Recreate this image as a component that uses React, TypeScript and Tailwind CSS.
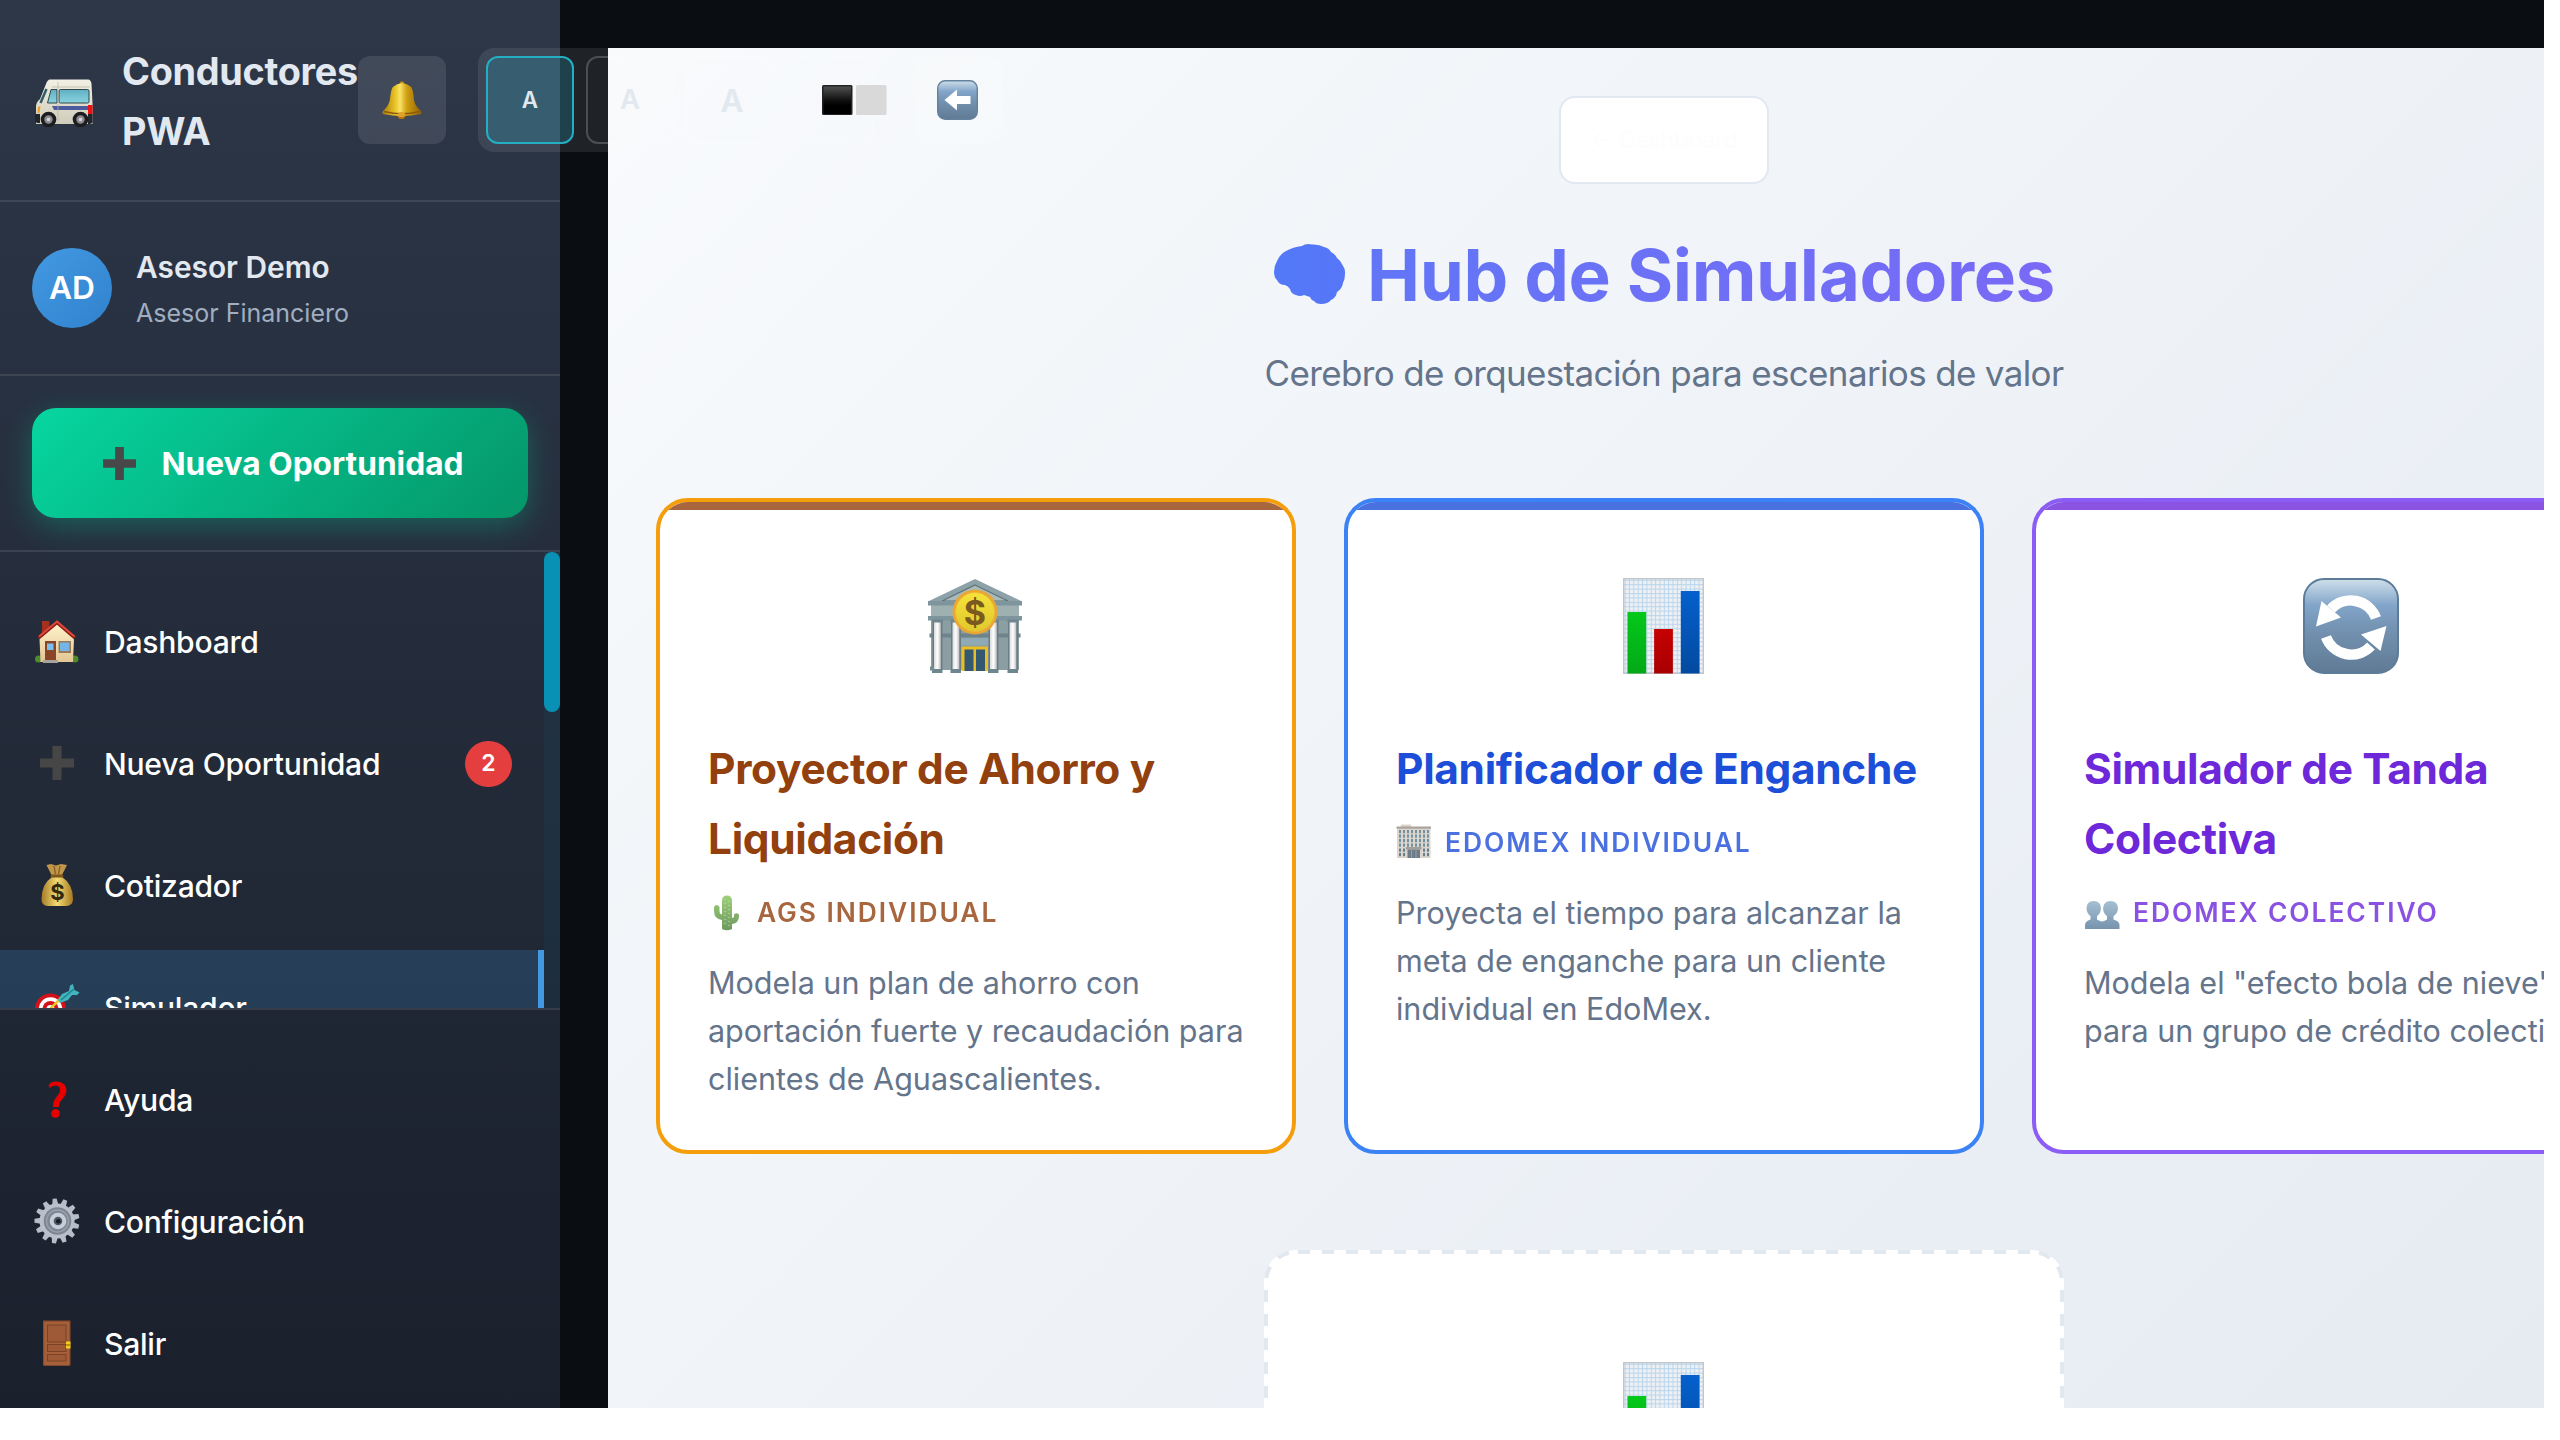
import React from "react";

function VanIcon() {
  return (
    <svg width="58" height="48" viewBox="0 0 58 48">
      <defs>
        <linearGradient id="vanBody" x1="0" y1="0" x2="0" y2="1">
          <stop offset="0" stopColor="#f2f0e4" />
          <stop offset="1" stopColor="#cfccba" />
        </linearGradient>
        <linearGradient id="vanGlass" x1="0" y1="0" x2="0" y2="1">
          <stop offset="0" stopColor="#5fb0c2" />
          <stop offset="1" stopColor="#8ad3df" />
        </linearGradient>
      </defs>
      <path d="M15 .5H53Q56 .5 56.500 5L57.500 24V45H1V28Q1 23 5 20L11 5Q12.500 .5 15 .5Z" fill="url(#vanBody)" />
      <path d="M11.500 10L5.500 24" stroke="#2f5f6c" strokeWidth="2.500" />
      <path d="M16 10.500H22V24H12.500Z" fill="url(#vanGlass)" stroke="#31474d" strokeWidth="1" />
      <rect x="24" y="10.500" width="30" height="13.500" rx="1.500" fill="url(#vanGlass)" stroke="#31474d" strokeWidth="1" />
      <path d="M17 27H53V31H19Z" fill="#4c5b9e" />
      <path d="M23 3V42M17 8H55" stroke="#b9b6a4" strokeWidth=".7" />
      <path d="M53 26H57.500V35H53Z" fill="#f01010" />
      <path d="M3 28L5.500 27L4.500 34H2.500Z" fill="#f0a020" />
      <path d="M0 35H5V44Q0 44 0 42ZM53 35H57.500V43Q57 45 53 45Z" fill="#23262c" />
      <circle cx="13.500" cy="40.500" r="7.800" fill="#1d1d20" />
      <circle cx="45.500" cy="40.500" r="7.800" fill="#1d1d20" />
      <circle cx="13.500" cy="40.500" r="4.200" fill="#8b8b90" />
      <circle cx="45.500" cy="40.500" r="4.200" fill="#8b8b90" />
      <circle cx="13.500" cy="40.500" r="1.800" fill="#d8d8dc" />
      <circle cx="45.500" cy="40.500" r="1.800" fill="#d8d8dc" />
    </svg>
  );
}

function BellIcon() {
  return (
    <svg width="40" height="38" viewBox="0 0 40 38">
      <defs>
        <linearGradient id="bell" x1="0" y1="0" x2="1" y2="0">
          <stop offset="0" stopColor="#a87a0c" />
          <stop offset=".32" stopColor="#e9c224" />
          <stop offset=".45" stopColor="#f8e266" />
          <stop offset=".62" stopColor="#d0a012" />
          <stop offset="1" stopColor="#8d5f08" />
        </linearGradient>
      </defs>
      <circle cx="20" cy="2.500" r="2.300" fill="#b8890f" />
      <circle cx="19.500" cy="34" r="4.200" fill="#b9720e" />
      <path d="M20 2Q31 3 31.500 14Q31.500 24 38 29Q40.500 31 39 33Q20 37 1 33Q-.5 31 2 29Q8 24 8.500 14Q9 3 20 2Z" fill="url(#bell)" />
      <path d="M2 30.500Q20 35 38 30.500" stroke="#8a5c0a" strokeWidth="1.500" fill="none" />
      <ellipse cx="19.500" cy="33.500" rx="3.500" ry="2.600" fill="#e0a22a" />
    </svg>
  );
}

function SquaresIcon() {
  return (
    <svg className="shrink-0" width="65" height="30" viewBox="0 0 65 30">
      <defs>
        <linearGradient id="sq" x1="0" y1="0" x2="0" y2="1">
          <stop offset="0" stopColor="#505050" />
          <stop offset=".5" stopColor="#101010" />
          <stop offset=".7" stopColor="#000" />
        </linearGradient>
      </defs>
      <rect width="30.500" height="30" rx="1.500" fill="#222" />
      <rect x="1.500" y="1.500" width="27.500" height="27.500" fill="url(#sq)" />
      <rect x="34" width="30.500" height="30" rx="1.500" fill="#d9d9d9" />
    </svg>
  );
}

function KeycapFill({ id }: { id: string }) {
  return (
    <linearGradient id={id} x1="0" y1="0" x2="0" y2="1">
      <stop offset="0" stopColor="#cfdfea" />
      <stop offset=".28" stopColor="#82a5c9" />
      <stop offset=".55" stopColor="#7391b0" />
      <stop offset="1" stopColor="#5f7a94" />
    </linearGradient>
  );
}

function BackIcon() {
  return (
    <svg width="41" height="40" viewBox="0 0 41 40">
      <defs><KeycapFill id="keyBack" /></defs>
      <rect x=".7" y=".7" width="39.600" height="38.600" rx="7.500" fill="url(#keyBack)" stroke="#64819d" strokeWidth="1.400" />
      <path d="M7.500 20L20 9.500V16H33.500V24H20V30.500Z" fill="#fff" />
    </svg>
  );
}

function RefreshIcon() {
  return (
    <svg width="96" height="96" viewBox="0 0 96 96">
      <defs><KeycapFill id="keyRefresh" /></defs>
      <rect x="1" y="1" width="94" height="94" rx="20" fill="url(#keyRefresh)" stroke="#5c7c99" strokeWidth="2" />
      <path d="M73 40A27 27 0 0 0 28 31M23 59A27 27 0 0 0 68 68" stroke="#fff" strokeWidth="10.500" fill="none" />
      <path d="M13 48.500L18.500 23L38 39.500ZM83.500 48L77.500 73L58 56.500Z" fill="#fff" />
    </svg>
  );
}

function PlusIcon({ size, color }: { size: number; color: string }) {
  return (
    <svg width={size} height={size} viewBox="0 0 34 34">
      <path d="M12.500 0H21.500V12.500H34V21.500H21.500V34H12.500V21.500H0V12.500H12.500Z" fill={color} />
    </svg>
  );
}

function HouseIcon() {
  return (
    <svg width="48" height="48" viewBox="0 0 48 48">
      <defs>
        <linearGradient id="wall" x1="0" y1="0" x2="0" y2="1">
          <stop offset="0" stopColor="#fff3cc" />
          <stop offset="1" stopColor="#e3c795" />
        </linearGradient>
      </defs>
      <path d="M9 4H16.500V10L9 17Z" fill="#a5301f" />
      <circle cx="5.500" cy="42" r="3.500" fill="#4f8a2c" />
      <circle cx="42" cy="42" r="3.500" fill="#4f8a2c" />
      <path d="M6.500 21L24 6L41 21L40 45H7.500Z" fill="url(#wall)" />
      <path d="M5.500 21L24 5.500L42 21" fill="none" stroke="#8e1d18" strokeWidth="3.400" />
      <path d="M6 19.500L24 4.500L41.500 19.500" fill="none" stroke="#e04a3a" strokeWidth="1.800" />
      <rect x="12" y="24" width="11" height="20" fill="#8a4529" />
      <rect x="14" y="26.500" width="6.500" height="6.500" fill="#7cc0f0" />
      <rect x="25.500" y="24" width="12.500" height="12" fill="#9c7a55" />
      <rect x="27" y="25.500" width="9.500" height="8.500" fill="#74b4e6" />
      <path d="M10 43H25V46H10Z" fill="#a7a29a" />
    </svg>
  );
}

function MoneyIcon() {
  return (
    <svg width="48" height="48" viewBox="0 0 48 48">
      <defs>
        <linearGradient id="bag" x1="0" y1="0" x2="1" y2="0">
          <stop offset="0" stopColor="#a67c28" />
          <stop offset=".5" stopColor="#f5db74" />
          <stop offset="1" stopColor="#a67820" />
        </linearGradient>
      </defs>
      <path d="M13.500 4L18 3L23 4.500L28 3L34 4L28.500 15H19Z" fill="#c29648" />
      <path d="M21 5L22.500 13M27 5L25.500 13" stroke="#86601f" strokeWidth="1.300" />
      <path d="M19 16H29Q40 23 40 38Q40 45 33 45H15Q8.500 45 8.500 38Q8.500 23 19 16Z" fill="url(#bag)" />
      <rect x="17.500" y="13.500" width="13" height="3" rx="1.500" fill="#7d5518" />
      <text x="24.500" y="38.500" textAnchor="middle" fontSize="22" fontWeight="700" fontFamily="Inter, sans-serif" fill="#33290f">$</text>
    </svg>
  );
}

function TargetIcon() {
  return (
    <svg width="48" height="48" viewBox="0 0 48 48">
      <circle cx="17.500" cy="26" r="15.500" fill="#d4111b" />
      <circle cx="17.500" cy="26" r="11.800" fill="#fff" />
      <circle cx="17.500" cy="26" r="8" fill="#d4111b" />
      <circle cx="17.500" cy="26" r="4" fill="#fff" />
      <path d="M17 26L29 14" stroke="#e8c928" strokeWidth="2.500" />
      <path d="M25 17L29 11L36 8L37 2.500L40 1L41.500 7L46.500 9.500L44 12H39L35 17L27 20Z" fill="#42b4bd" />
      <path d="M28 17L41 6" stroke="#1f828c" strokeWidth="1.400" />
    </svg>
  );
}

function QuestionIcon() {
  return (
    <svg width="48" height="48" viewBox="0 0 48 48">
      <path d="M15.500 10.500Q17.500 6.500 23 6.500Q33.500 7 33.500 15Q33.500 20 29 24.500Q25.500 28 26 32H20Q19.500 26.500 23.500 22Q27 18 27 15Q27 10.500 22.500 10.500Q19 10.500 17 13Z" fill="#e60000" />
      <ellipse cx="22.500" cy="38.500" rx="4.400" ry="4.400" fill="#e60000" />
    </svg>
  );
}

function GearIcon() {
  return (
    <svg width="48" height="48" viewBox="0 0 48 48">
      {Array.from({ length: 13 }, (_, i) => (
        <path key={i} d="M20.900 8L22 1.500H26L27.100 8Z" fill="#b5bdc9" transform={`rotate(${i * 27.69 - 6} 24 24)`} />
      ))}
      <circle cx="24" cy="24" r="17.500" fill="#b9c0cb" />
      <circle cx="24.500" cy="24" r="13.800" fill="#7d8793" />
      <circle cx="24.500" cy="24" r="11" fill="none" stroke="#98a1ac" strokeWidth="1.400" />
      <circle cx="25" cy="24" r="8.300" fill="#c6ced9" />
      <circle cx="25" cy="24" r="4.300" fill="#4d5865" />
      <circle cx="25.300" cy="24.300" r="2.300" fill="#171c26" />
    </svg>
  );
}

function DoorIcon() {
  return (
    <svg width="48" height="48" viewBox="0 0 48 48">
      <rect x="10" y="1.500" width="27.500" height="45" fill="#8a4a2c" />
      <rect x="11.200" y="2.700" width="25.200" height="43.800" fill="#a5603a" />
      <rect x="14.500" y="6" width="18.500" height="17" fill="#9e5a36" stroke="#7c4226" strokeWidth="1" />
      <rect x="14.500" y="25.500" width="18.500" height="7" fill="#9e5a36" stroke="#7c4226" strokeWidth="1" />
      <rect x="14.500" y="35.500" width="18.500" height="6.500" fill="#9e5a36" stroke="#7c4226" strokeWidth="1" />
      <rect x="33" y="22.500" width="4.500" height="7" fill="#f1cf1f" />
      <path d="M33 26H37.500" stroke="#7c5a10" strokeWidth="1" />
    </svg>
  );
}

function BankIcon() {
  return (
    <svg width="94" height="96" viewBox="0 0 94 96">
      <defs>
        <linearGradient id="coin" x1="0" y1="0" x2="0" y2="1">
          <stop offset="0" stopColor="#f7e23a" />
          <stop offset="1" stopColor="#e0c92c" />
        </linearGradient>
        <linearGradient id="pillar" x1="0" y1="0" x2="1" y2="0">
          <stop offset="0" stopColor="#d9d9dc" />
          <stop offset=".5" stopColor="#fff" />
          <stop offset="1" stopColor="#c0bfc4" />
        </linearGradient>
      </defs>
      <path d="M47 1L93 23H1Z" fill="#8da2a8" />
      <path d="M47 7L80 23H14Z" fill="#a9babb" stroke="#5f7277" strokeWidth="1.200" />
      <rect x="3" y="26" width="88" height="66" fill="#8b9fa3" />
      <rect x="3" y="27" width="88" height="11" fill="#9eb0b0" />
      <rect x="0" y="23" width="94" height="4.500" fill="#7f959d" />
      <rect x="0" y="38" width="94" height="4.500" fill="#7f959d" />
      <rect x="1.500" y="55.500" width="91" height="4" fill="#6e848c" />
      <rect x="31" y="60" width="31" height="7" fill="#8fa9b5" />
      {[6, 24.500, 62, 81.500].map((x) => (
        <g key={x}>
          <rect x={x - 1.500} y="44" width="10" height="48" fill="#687c82" />
          <rect x={x} y="44" width="6.800" height="48" fill="url(#pillar)" />
          <rect x={x - 2} y="41.500" width="11" height="3" fill="#6e868e" />
          <rect x={x - 2} y="91" width="10.500" height="4" fill="#6e868e" />
        </g>
      ))}
      <rect x="2" y="88.500" width="4" height="4" fill="#768b92" />
      <rect x="33.500" y="68.500" width="26.500" height="24.500" fill="#e8bd25" />
      <rect x="36.500" y="71.500" width="9" height="21.500" fill="#355871" />
      <rect x="48" y="71.500" width="9" height="21.500" fill="#355871" />
      <circle cx="47" cy="34" r="22.500" fill="#e8a733" />
      <circle cx="47" cy="34" r="19.500" fill="url(#coin)" stroke="#f0b83a" strokeWidth="1" />
      <text x="47" y="46.500" textAnchor="middle" fontSize="34" fontWeight="700" fontFamily="Inter, sans-serif" fill="#7a5a1e">$</text>
    </svg>
  );
}

function ChartIcon() {
  return (
    <svg width="81" height="96" viewBox="0 0 82 96" preserveAspectRatio="none">
      <defs>
        <pattern id="grid" width="4.400" height="4.400" patternUnits="userSpaceOnUse">
          <path d="M0 2.200H4.400M2.200 0V4.400" stroke="#b9d6ee" strokeWidth="1.100" />
        </pattern>
        <linearGradient id="gBar" x1="0" y1="0" x2="0" y2="1"><stop offset="0" stopColor="#04c81b" /><stop offset="1" stopColor="#03a916" /></linearGradient>
        <linearGradient id="rBar" x1="0" y1="0" x2="0" y2="1"><stop offset="0" stopColor="#c60000" /><stop offset="1" stopColor="#a80000" /></linearGradient>
        <linearGradient id="bBar" x1="0" y1="0" x2="0" y2="1"><stop offset="0" stopColor="#0560cd" /><stop offset="1" stopColor="#024a9f" /></linearGradient>
      </defs>
      <rect width="82" height="96" fill="#f0f1f2" />
      <rect width="82" height="96" fill="url(#grid)" />
      <rect x=".7" y=".7" width="80.600" height="94.600" fill="none" stroke="#c3c6c9" strokeWidth="1.400" />
      <rect x="4.500" y="34" width="19" height="61.500" fill="url(#gBar)" />
      <rect x="31.500" y="51" width="19" height="44.500" fill="url(#rBar)" />
      <rect x="58.500" y="13" width="19" height="82.500" fill="url(#bBar)" />
    </svg>
  );
}

function CactusIcon() {
  return (
    <svg width="36" height="36" viewBox="0 0 36 36">
      <defs>
        <linearGradient id="cactus" x1="0" y1="0" x2="0" y2="1">
          <stop offset="0" stopColor="#86c65a" />
          <stop offset="1" stopColor="#4a7f38" />
        </linearGradient>
      </defs>
      <path d="M14 6Q14 .5 19 .5Q24 .5 24 6V23Q26 23 26 21V19.500Q28.500 17 31 19.500V21Q31 28 24 29V34Q19 36.500 14 34V25Q6 24 6 16V12Q8.500 8 11.500 12V16Q11.500 19 14 19.500Z" fill="url(#cactus)" />
      <path d="M17 4V32M21 6V32" stroke="#c9e8a8" strokeWidth=".9" strokeDasharray="1 3" />
    </svg>
  );
}

function BuildingIcon() {
  return (
    <svg width="36" height="36" viewBox="0 0 36 36">
      <rect x="5" y=".5" width="10" height="3" fill="#d3c9bc" />
      <rect x="1" y="4" width="33.500" height="30" fill="#d3cbc2" />
      <rect x=".5" y="2.500" width="34.500" height="2.200" fill="#958c85" />
      {[6, 10.500, 15, 19.500].flatMap((y) => [3, 7, 11, 15, 19, 23, 27, 31].map((x) => <rect key={`${x}-${y}`} x={x} y={y} width="2" height="3.200" fill="#4f7689" />))}
      {[24.500, 29].flatMap((y) => [3, 7, 27, 31].map((x) => <rect key={`${x}-${y}`} x={x} y={y} width="2" height="3.200" fill="#41606f" />))}
      <rect x="10" y="23" width="15.500" height="2.500" fill="#8d857e" />
      <rect x="11.500" y="25.500" width="12.500" height="8.500" fill="#4a5d6b" />
      <path d="M15.500 26V34M20 26V34" stroke="#8798a3" strokeWidth=".8" />
    </svg>
  );
}

function PeopleIcon() {
  return (
    <svg width="36" height="36" viewBox="0 0 36 36">
      <defs>
        <linearGradient id="people" x1="0" y1="0" x2="0" y2="1">
          <stop offset="0" stopColor="#8fb0c8" />
          <stop offset="1" stopColor="#55799a" />
        </linearGradient>
      </defs>
      <path d="M9.500 6Q17 6 17 13.500Q16.500 19 13 21V24.500Q15.500 26 18 26.500Q21 26 23 24.500V21Q19.500 19 19 13.500Q19.500 6 26.500 6Q34 6 34 13.500Q33.500 19 29.500 21V24.500Q35.500 26 35.500 30V34H1V30Q1 26 6.500 24.500V21Q3 19 2.500 13.500Q2.500 6 9.500 6Z" fill="url(#people)" />
    </svg>
  );
}

function BrainIcon() {
  return (
    <svg width="72" height="60" viewBox="0 0 72 60">
      <defs>
        <linearGradient id="brain" x1="0" y1="0" x2="1" y2="0">
          <stop offset="0" stopColor="#5379f7" />
          <stop offset="1" stopColor="#5676f7" />
        </linearGradient>
      </defs>
      <path d="M28 2Q32 -1 38 .5Q45 0 50 3Q55 4 57 8Q61 10 63 14Q67 17 68.500 21Q71.500 25 71 30Q71 35 69 39Q68 45 63 48Q62 54 57 56Q54 60 47 60Q42 60 40 57Q37 56 36 53Q33 52 30 51Q26 53 22 51Q17 50 16 45Q14 42 11 41Q5 41 3 36Q0 33 0 28Q0 22 3 17Q6 10 12 7Q19 3 28 2Z" fill="url(#brain)" />
    </svg>
  );
}

type NavProps = { icon: React.ReactNode; label: string; badge?: string; active?: boolean };

function NavItem({ icon, label, badge, active }: NavProps) {
  return (
    <div className={`mb-[6px] flex h-[116px] shrink-0 items-center pl-[33px] ${active ? "border-r-[6px] border-[#4299e1] bg-[#4299e1]/20 pr-[26px]" : "pr-8"}`}>
      <span className="mb-[3px] flex size-12 shrink-0 items-center justify-center">{icon}</span>
      <span className="ml-[23px] text-[30.1px] leading-[48px] font-medium tracking-[-0.25px] text-white">{label}</span>
      {badge && (
        <span className="ml-auto flex h-[46px] w-[47px] items-center justify-center rounded-full bg-[#e53e3e] pb-px text-[23px] font-semibold text-white">{badge}</span>
      )}
    </div>
  );
}

function Sidebar() {
  return (
    <aside className="relative z-10 flex h-[1408px] w-[560px] shrink-0 flex-col bg-linear-to-b from-[#2d3748] to-[#1a202c]">
      <header className="flex h-[202px] shrink-0 items-center border-b-2 border-white/10 pl-[35px]">
        <span className="mt-[6px] shrink-0"><VanIcon /></span>
        <h2 className="mt-0.5 ml-[29px] w-[236px] shrink-0 text-[37.8px] leading-[60.500px] font-bold tracking-[-0.3px] text-[#e2e8f0]">Conductores PWA</h2>
        <button className="flex size-[88px] shrink-0 items-center justify-center rounded-xl bg-white/10"><BellIcon /></button>
        <div className="ml-8 flex shrink-0 gap-3 rounded-2xl bg-white/[0.085] p-2 font-semibold text-[#e2e8f0]">
          <button className="flex size-[88px] items-center justify-center rounded-xl border-2 border-[#25adc3] bg-[#1fbedc]/20 text-[22.400px]">A</button>
          <button className="flex size-[88px] items-center justify-center rounded-xl border-2 border-white/20 text-[27.500px]">A</button>
          <button className="flex size-[88px] items-center justify-center rounded-xl border-2 border-white/20 pt-0.5 pl-1 text-[31.500px]">A</button>
          <button className="flex size-[88px] items-center rounded-xl border-2 border-white/20 pl-[34px]"><SquaresIcon /></button>
        </div>
        <button className="ml-8 flex size-[88px] shrink-0 items-center justify-center rounded-xl bg-white/10 pr-0.5"><BackIcon /></button>
      </header>

      <section className="flex h-[174px] shrink-0 items-center gap-6 border-b-2 border-white/10 px-8">
        <div className="flex size-20 items-center justify-center rounded-full bg-linear-135 from-[#4299e1] to-[#3182ce] text-[31.700px] font-semibold text-white">AD</div>
        <div>
          <div className="text-[29.850px] leading-[48px] font-semibold text-[#e2e8f0]">Asesor Demo</div>
          <div className="mt-0.5 -mb-px text-[25px] leading-[41px] text-[#a0aec0]">Asesor Financiero</div>
        </div>
      </section>

      <section className="h-[176px] shrink-0 border-b-2 border-white/10 px-8 pt-8">
        <button className="flex h-[110px] w-full items-center justify-center rounded-3xl bg-linear-135 from-[#06d6a0] to-[#059669] pl-[7px] text-[31.700px] font-bold text-white shadow-[0_8px_30px_rgba(6,214,160,0.3)]">
          <PlusIcon size={33} color="#484848" />
          <span className="mt-0.5 ml-[25px]">Nueva Oportunidad</span>
        </button>
      </section>

      <div className="flex h-[456px] shrink-0 overflow-hidden">
        <nav className="flex w-[544px] flex-col pt-8">
          <NavItem icon={<HouseIcon />} label="Dashboard" />
          <NavItem icon={<PlusIcon size={34} color="#464646" />} label="Nueva Oportunidad" badge="2" />
          <NavItem icon={<MoneyIcon />} label="Cotizador" />
          <NavItem icon={<TargetIcon />} label="Simulador" active />
        </nav>
        <div className="w-4 bg-[#0891b2]/[0.07]">
          <div className="h-40 rounded-full bg-[#0891b5]" />
        </div>
      </div>

      <div className="flex h-[400px] shrink-0 flex-col overflow-hidden border-t-2 border-white/10 pt-8">
        <NavItem icon={<QuestionIcon />} label="Ayuda" />
        <NavItem icon={<GearIcon />} label="Configuración" />
        <NavItem icon={<DoorIcon />} label="Salir" />
      </div>
    </aside>
  );
}

type CardProps = {
  border: string;
  tone: string;
  band: string;
  icon: React.ReactNode;
  title: string;
  tagIcon: React.ReactNode;
  tag: string;
  lines: string[];
};

function SimCard({ border, tone, band, icon, title, tagIcon, tag, lines }: CardProps) {
  return (
    <article className={`h-[656px] w-[640px] overflow-hidden rounded-[32px] border-4 bg-white ${border}`}>
      <div className={`h-2 opacity-80 ${band}`} />
      <div className="px-12 pt-10">
        <div className="flex h-[152px] items-center justify-center pr-0.5">{icon}</div>
        <h3 className={`mt-8 text-[42.400px] leading-[70.400px] font-bold tracking-[-0.32px] ${tone}`}>{title}</h3>
        <div className={`mt-[15.500px] flex h-[45px] items-center opacity-80 ${tone}`}>
          {tagIcon}
          <span className="ml-[13px] text-[26.400px] leading-[45px] font-semibold tracking-[1.950px]">{tag}</span>
        </div>
        <p className="mt-6 text-[30.540px] leading-[48px] tracking-[-0.02px] whitespace-nowrap text-[#64748b]">
          {lines.map((line) => <span key={line} className="block">{line}</span>)}
        </p>
      </div>
    </article>
  );
}

function DashedOutline() {
  return (
    <svg className="absolute inset-0" width="800" height="400" viewBox="0 0 800 400" fill="none" stroke="#e2e8f0" strokeWidth="4" strokeDasharray="12 12">
      <path d="M2 148V32A30 30 0 0 1 32 2" />
      <path d="M798 148V32A30 30 0 0 0 768 2" />
      <path d="M34 2H766" />
    </svg>
  );
}

export default function App() {
  return (
    <div className="h-[1440px] w-[2560px] overflow-hidden bg-white font-['Inter',sans-serif]">
      <div className="flex h-[1408px] w-[2544px] overflow-hidden bg-[#0a0e13]">
        <Sidebar />
        <main className="mt-12 ml-12 h-[1800px] w-[2112px] shrink-0 bg-linear-135 from-[#f8fafc] to-[#e2e8f0] p-12">
          <div className="flex justify-center">
            <button className="h-[88px] w-[210px] rounded-2xl border-2 border-[#e2e8f0] bg-white text-[23px] text-[#fdfdfe]">← Dashboard</button>
          </div>
          <h1 className="mt-[35px] flex h-28 items-center justify-center bg-linear-135 from-[#3b82f6] to-[#8b5cf6] bg-clip-text pl-px text-[71px] leading-[112px] font-bold tracking-[-0.42px] text-transparent">
            <span className="-mt-0.5"><BrainIcon /></span>
            <span className="ml-[21px]">Hub de Simuladores</span>
          </h1>
          <p className="mt-[14px] text-center text-[35px] leading-[56px] tracking-[-0.65px] text-[#64748b]">Cerebro de orquestación para escenarios de valor</p>

          <div className="mt-[97px] flex gap-12">
            <SimCard
              border="border-[#f59e0b]" tone="text-[#92400e]" band="bg-[#92400e]"
              icon={<BankIcon />} title="Proyector de Ahorro y Liquidación"
              tagIcon={<CactusIcon />} tag="AGS INDIVIDUAL"
              lines={["Modela un plan de ahorro con", "aportación fuerte y recaudación para", "clientes de Aguascalientes."]}
            />
            <SimCard
              border="border-[#3b82f6]" tone="text-[#1d4ed8]" band="bg-[#1d4ed8]"
              icon={<ChartIcon />} title="Planificador de Enganche"
              tagIcon={<BuildingIcon />} tag="EDOMEX INDIVIDUAL"
              lines={["Proyecta el tiempo para alcanzar la", "meta de enganche para un cliente", "individual en EdoMex."]}
            />
            <SimCard
              border="border-[#8b5cf6]" tone="text-[#6d28d9]" band="bg-[#6d28d9]"
              icon={<RefreshIcon />} title="Simulador de Tanda Colectiva"
              tagIcon={<PeopleIcon />} tag="EDOMEX COLECTIVO"
              lines={['Modela el "efecto bola de nieve"', "para un grupo de crédito colectivo."]}
            />
          </div>

          <div className="relative mx-auto mt-24 flex h-[400px] w-[800px] justify-center rounded-[32px] bg-white pt-28 pr-0.5">
            <DashedOutline />
            <ChartIcon />
          </div>
        </main>
      </div>
    </div>
  );
}
